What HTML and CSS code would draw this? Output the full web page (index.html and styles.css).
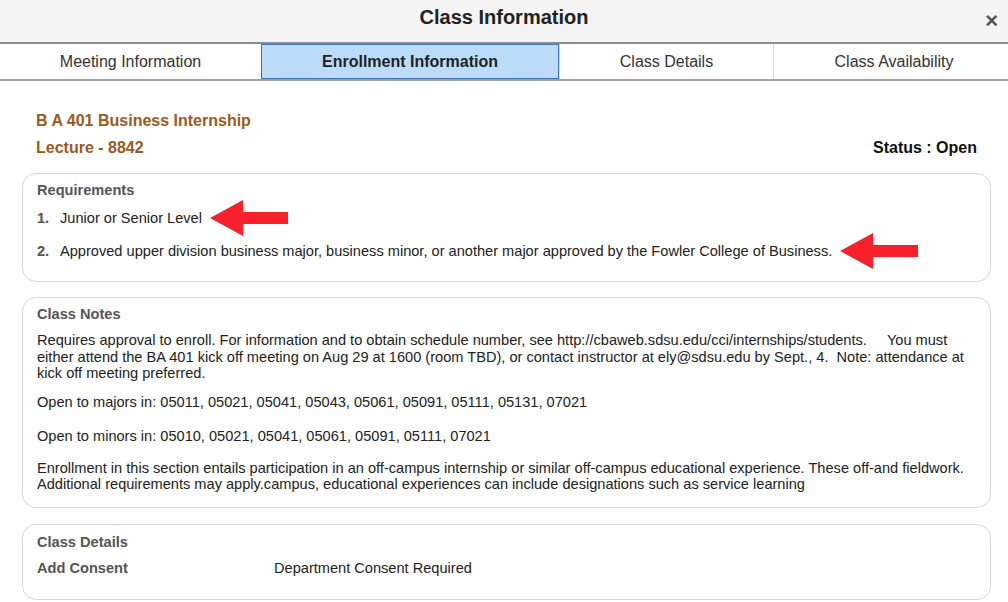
FILE: index.html
```html
<!DOCTYPE html>
<html lang="en">
<head>
    <meta charset="UTF-8">
    <title>Class Information</title>
    <link rel="stylesheet" href="styles.css">
</head>
<body>
    <div class="modal-header">
        <h1>Class Information</h1>
        <span class="close">&times;</span>
    </div>
    <div class="tabs">
        <div class="tab">Meeting Information</div>
        <div class="tab active">Enrollment Information</div>
        <div class="tab">Class Details</div>
        <div class="tab last">Class Availability</div>
    </div>

    <div class="content">
        <div class="class-title">B A 401 Business Internship</div>
        <div class="title-row">
            <div class="class-title">Lecture - 8842</div>
            <div class="status">Status : Open</div>
        </div>

        <div class="group requirements">
            <div class="group-title">Requirements</div>
            <ol class="req-list">
                <li><span class="num">1.</span>Junior or Senior Level
                    <svg class="arrow" width="80" height="38" viewBox="0 0 80 38"><polygon points="0,19 33,1 33,13 78,13 78,25 33,25 33,37" fill="#f6212d"/></svg>
                </li>
                <li><span class="num">2.</span>Approved upper division business major, business minor, or another major approved by the Fowler College of Business.
                    <svg class="arrow" width="80" height="38" viewBox="0 0 80 38"><polygon points="0,19 33,1 33,13 78,13 78,25 33,25 33,37" fill="#f6212d"/></svg>
                </li>
            </ol>
        </div>

        <div class="group notes">
            <div class="group-title">Class Notes</div>
            <p>Requires approval to enroll. For information and to obtain schedule number, see http://cbaweb.sdsu.edu/cci/internships/students. &nbsp;&nbsp;&nbsp; You must either attend the BA 401 kick off meeting on Aug 29 at 1600 (room TBD), or contact instructor at ely@sdsu.edu by Sept., 4. &nbsp;Note: attendance at kick off meeting preferred.</p>
            <p class="majors">Open to majors in: 05011, 05021, 05041, 05043, 05061, 05091, 05111, 05131, 07021</p>
            <p class="minors">Open to minors in: 05010, 05021, 05041, 05061, 05091, 05111, 07021</p>
            <p>Enrollment in this section entails participation in an off-campus internship or similar off-campus educational experience. These off-and fieldwork. Additional requirements may apply.campus, educational experiences can include designations such as service learning</p>
        </div>

        <div class="group details">
            <div class="group-title">Class Details</div>
            <div class="detail-row">
                <span class="label">Add Consent</span>
                <span>Department Consent Required</span>
            </div>
        </div>
    </div>
</body>
</html>
```

FILE: styles.css
```css
body {
    margin: 0;
    font-family: "Liberation Sans", Arial, sans-serif;
    font-size: 14.6px;
    color: #222;
    background-color: #fff;
}
.modal-header {
    position: relative;
    height: 42px;
    background-color: #f4f4f4;
    border-bottom: 2px solid #8c8c8c;
    display: flex;
    justify-content: center;
}
.modal-header h1 {
    margin: 0;
    padding-top: 6px;
    font-size: 20px;
    color: #222;
}
.close {
    position: absolute;
    right: 10px;
    top: 8px;
    font-size: 22px;
    font-weight: bold;
    color: #555;
}
.tabs {
    display: grid;
    grid-template-columns: 261px 298px 214px 1fr;
    height: 35px;
    border-bottom: 2px solid #a0a0a0;
}
.tab {
    display: flex;
    align-items: center;
    justify-content: center;
    font-size: 16px;
    color: #333;
    border-left: 1px solid #d6d6d6;
}
.tab:first-child {
    border-left: none;
}
.tab.last {
    padding-left: 6px;
}
.tab.active {
    background-color: #bbdcf8;
    border: 1px solid #3f74b4;
    font-weight: bold;
    color: #222;
}
.content {
    padding: 26px 17px 0 22px;
}
.class-title {
    color: #9a5a1e;
    font-weight: bold;
    font-size: 16px;
    padding-left: 14px;
    line-height: 27px;
}
.title-row {
    display: flex;
    justify-content: space-between;
    align-items: center;
}
.status {
    font-weight: bold;
    font-size: 16px;
    color: #111;
    padding-right: 14px;
}
.group {
    border: 1px solid #d8d8d8;
    border-radius: 14px;
    padding: 8px 14px 12px 14px;
    margin-top: 12px;
    margin-bottom: 15px;
}
.group-title {
    font-weight: bold;
    color: #555;
    margin-bottom: 3px;
}
.req-list {
    list-style: none;
    margin: 0;
    padding: 0 0 2px 0;
}
.req-list li {
    display: flex;
    align-items: center;
    height: 33px;
}
.num {
    font-weight: bold;
    color: #555;
    width: 23px;
}
.arrow {
    margin-left: 8px;
}
.notes .group-title {
    margin-bottom: 10px;
}
.notes {
    padding-bottom: 14px;
    margin-bottom: 16px;
}
.group p {
    margin: 0 0 12px 0;
    line-height: 16.5px;
}
.group p.majors {
    margin-bottom: 18px;
}
.group p.minors {
    margin-bottom: 15px;
}
.group p:last-child {
    margin-bottom: 0;
}
.details {
    padding-top: 9px;
}
.detail-row {
    display: flex;
    padding: 7px 0 11px 0;
}
.label {
    font-weight: bold;
    color: #555;
    width: 237px;
}
```
